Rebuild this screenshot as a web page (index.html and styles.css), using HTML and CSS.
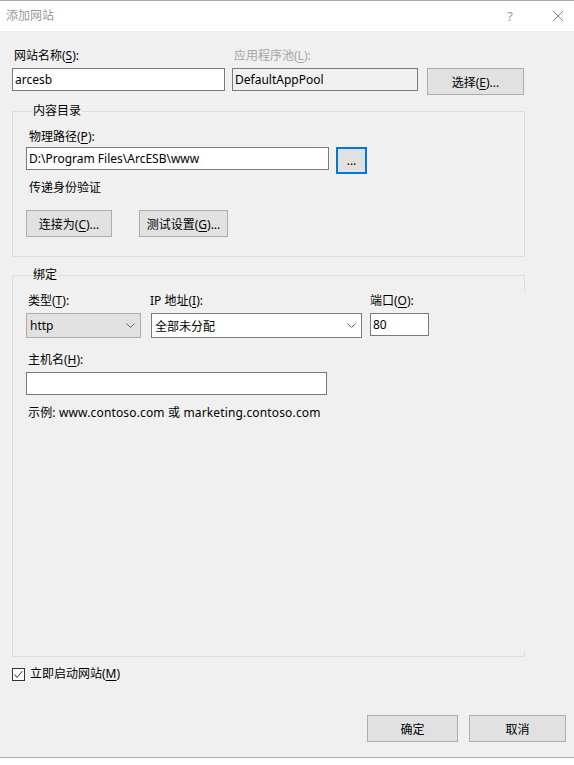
FILE: index.html
```html
<!DOCTYPE html>
<html lang="zh-CN">
<head>
  <meta charset="UTF-8" />
  <meta name="viewport" content="width=device-width, initial-scale=1.0"/>
  <title>添加网站</title>
  <link rel="stylesheet" href="styles.css">
</head>
<body>
  <div class="window">
    <div class="titlebar">
      <span class="title">添加网站</span>
      <span class="help">?</span>
      <svg class="close" width="12" height="12" viewBox="0 0 12 12">
        <path d="M1 1 L11 11 M11 1 L1 11" stroke="#888" stroke-width="1" fill="none"/>
      </svg>
    </div>

    <div class="content">
      <div class="site-row">
        <label class="lbl">网站名称(<u>S</u>):</label>
        <label class="lbl disabled">应用程序池(<u>L</u>):</label>
        <span></span>
        <input type="text" class="txt site-name" value="arcesb" />
        <input type="text" class="txt pool" value="DefaultAppPool" readonly />
        <button class="btn pick">选择(<u>E</u>)...</button>
      </div>

      <fieldset class="group content-dir">
        <legend>内容目录</legend>
        <label class="lbl">物理路径(<u>P</u>):</label>
        <div class="path-row">
          <input type="text" class="txt path" value="D:\Program Files\ArcESB\www" />
          <button class="btn browse">...</button>
        </div>
        <div class="lbl auth">传递身份验证</div>
        <div class="auth-row">
          <button class="btn connect">连接为(<u>C</u>)...</button>
          <button class="btn test">测试设置(<u>G</u>)...</button>
        </div>
      </fieldset>

      <fieldset class="group binding">
        <legend>绑定</legend>
        <div class="binding-body">
          <div class="bind-row">
            <label class="lbl">类型(<u>T</u>):</label>
            <label class="lbl ip-lbl">IP 地址(<u>I</u>):</label>
            <label class="lbl port-lbl">端口(<u>O</u>):</label>
            <div class="select type">
              <span>http</span>
              <svg width="9" height="5" viewBox="0 0 9 5"><path d="M0.5 0.5 L4.5 4.5 L8.5 0.5" stroke="#606060" fill="none"/></svg>
            </div>
            <div class="select ip">
              <span>全部未分配</span>
              <svg width="9" height="5" viewBox="0 0 9 5"><path d="M0.5 0.5 L4.5 4.5 L8.5 0.5" stroke="#606060" fill="none"/></svg>
            </div>
            <input type="text" class="txt port" value="80" />
          </div>
          <label class="lbl host-lbl">主机名(<u>H</u>):</label>
          <input type="text" class="txt host" value="" />
          <div class="lbl example">示例: www.contoso.com 或 marketing.contoso.com</div>
        </div>
      </fieldset>

      <div class="check-row">
        <span class="checkbox">
          <svg width="11" height="11" viewBox="0 0 11 11"><path d="M1.5 5.5 L4 8.5 L9.5 2" stroke="#333" stroke-width="1" fill="none"/></svg>
        </span>
        <span class="lbl">立即启动网站(<u>M</u>)</span>
      </div>

      <div class="footer">
        <button class="btn ok">确定</button>
        <button class="btn cancel">取消</button>
      </div>
    </div>
  </div>
</body>
</html>
```

FILE: styles.css
```css
body {
  margin: 0;
  background: #fff;
  font-family: "Noto Sans", "Noto Sans CJK SC", sans-serif;
  font-size: 12px;
  color: #000;
}
.window {
  box-sizing: border-box;
  width: 574px;
  height: 758px;
  background: #f0f0f0;
  border-top: 1px solid #aaa;
  border-bottom: 1px solid #aaa;
}
.titlebar {
  height: 30px;
  background: #fff;
  display: flex;
  align-items: center;
  padding-left: 6px;
  color: #999;
}
.title {
  flex: 1;
  line-height: 16px;
}
.help {
  font-size: 13px;
  margin-right: 39px;
  color: #999;
}
.close {
  margin-right: 10px;
}
.content {
  padding: 17px 0 0 12px;
}
.lbl {
  line-height: 16px;
  padding-left: 2px;
  white-space: nowrap;
}
.disabled {
  color: #a6a6a6;
}
u {
  text-decoration: underline;
  text-underline-offset: 2px;
}
.txt {
  box-sizing: border-box;
  height: 23px;
  margin: 0;
  padding: 0 2px;
  border: 1px solid #7a7a7a;
  background: #fff;
  font: inherit;
  font-size: 12px;
  outline: none;
}
.btn {
  box-sizing: border-box;
  height: 27px;
  margin: 0;
  padding: 0;
  border: 1px solid #adadad;
  background: #e1e1e1;
  font: inherit;
  font-size: 12px;
  color: #000;
}

/* name / app pool row */
.site-row {
  display: grid;
  grid-template-columns: 213px 186px 99px;
  column-gap: 7px;
  row-gap: 4px;
  align-items: start;
}
.site-row .btn {
  width: 97px;
  margin-left: 2px;
}
.pool {
  background: #f0f0f0;
}

/* group boxes */
.group {
  box-sizing: border-box;
  width: 513px;
  margin: 8px 0 0 0;
  padding: 10px 0 19px 13px;
  border: 1px solid #dcdcdc;
}
.group legend {
  padding: 0 1px;
  margin-left: 6px;
  line-height: 16px;
}
.content-dir .lbl {
  display: block;
  padding-left: 3px;
}
.path-row {
  display: flex;
  align-items: flex-start;
  gap: 7px;
  margin-top: 2px;
}
.path {
  width: 303px;
}
.browse {
  width: 31px;
  border: 2px solid #0078d7;
}
.auth {
  margin-top: 6px;
}
.auth-row {
  display: flex;
  gap: 27px;
  margin-top: 14px;
}
.connect {
  width: 86px;
}
.test {
  width: 89px;
}

/* bindings */
.binding {
  position: relative;
  margin-top: 10px;
  padding-bottom: 0;
  border-right-color: transparent;
}
.binding::before,
.binding::after {
  content: "";
  position: absolute;
  right: -1px;
  width: 1px;
  background: #dcdcdc;
}
.binding::before {
  top: -8px;
  height: 17px;
}
.binding::after {
  bottom: -1px;
  height: 7px;
}
.binding-body {
  height: 363px;
}
.bind-row {
  display: grid;
  grid-template-columns: 115px 211px 57px;
  column-gap: 10px;
  row-gap: 4px;
  align-items: start;
}
.bind-row .ip-lbl {
  padding-left: 0;
  margin-left: -1px;
}
.bind-row .port-lbl {
  padding-left: 0;
  margin-left: -2px;
}
.bind-row .port {
  margin-left: -2px;
}
.select {
  box-sizing: border-box;
  height: 25px;
  display: flex;
  align-items: center;
  justify-content: space-between;
  padding: 0 5px 0 3px;
  border: 1px solid #7a7a7a;
  background: #fff;
}
.select.type {
  background: #e1e1e1;
  border-color: #adadad;
}
.host-lbl {
  display: block;
  margin-top: 14px;
}
.host {
  display: block;
  width: 301px;
  margin-top: 4px;
}
.example {
  margin-top: 10px;
  letter-spacing: 0.15px;
}

/* footer */
.check-row {
  display: flex;
  align-items: center;
  gap: 5px;
  margin-top: 9px;
}
.checkbox {
  box-sizing: border-box;
  width: 13px;
  height: 13px;
  border: 1px solid #333;
  background: #fff;
  display: flex;
  align-items: center;
  justify-content: center;
}
.checkbox + .lbl {
  padding-left: 0;
}
.footer {
  display: flex;
  justify-content: flex-end;
  gap: 11px;
  margin-top: 33px;
  padding-right: 8px;
}
.ok {
  width: 91px;
}
.cancel {
  width: 97px;
}
```
